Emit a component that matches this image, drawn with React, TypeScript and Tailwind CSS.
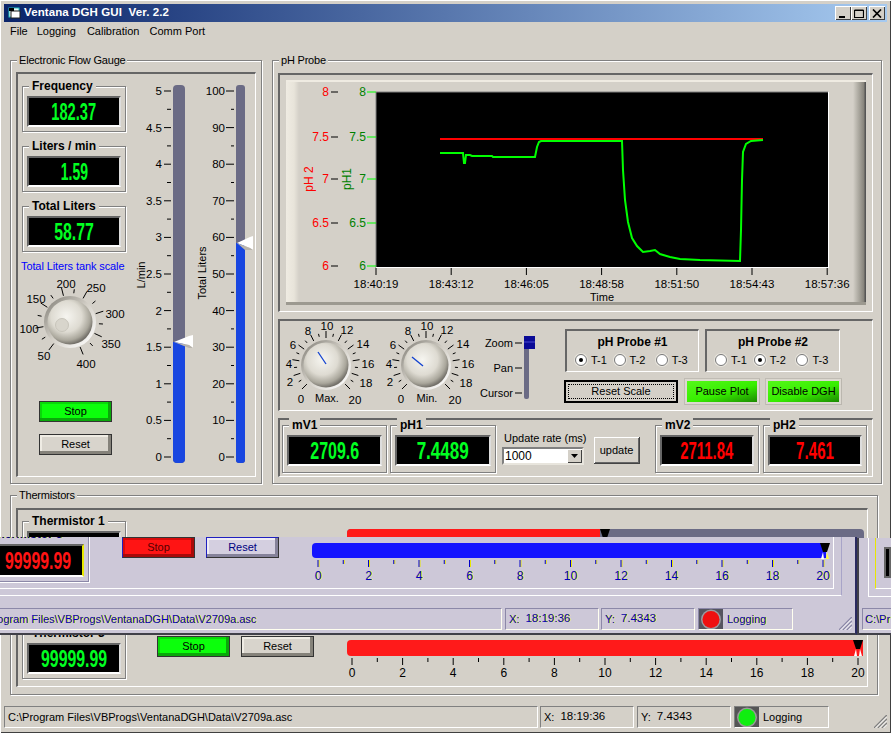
import React from "react";

const ink = "#000";

function Tx({ x, y, c = ink, a = "middle", s = 11, children }: { x: number; y: number; c?: string; a?: "start" | "middle" | "end"; s?: number; children: React.ReactNode }) {
  return (
    <text x={x} y={y + 4} fill={c} textAnchor={a} fontSize={s}>
      {children}
    </text>
  );
}

function Group({ label, className, children }: { label: string; className: string; children: React.ReactNode }) {
  return (
    <div className={"border border-[#808080] shadow-[inset_1px_1px_0_#fff,1px_1px_0_#fff] flex flex-col " + className}>
      <div className="-mt-[8px] ml-[6px] mb-[-6px] w-fit h-[14px] px-[2px] bg-[#d4d0c8] text-[11px] tracking-[-0.2px] leading-[14px] whitespace-nowrap">{label}</div>
      {children}
    </div>
  );
}

const sunken = "border-t-2 border-l-2 border-[#666666] border-r border-b border-r-white border-b-white";

function Reading({ label, value, color = "text-[#00ff21]", w = "w-[104px]", h = "h-[46px]", sx = "scale-x-[0.63]" }: { label: string; value: string; color?: string; w?: string; h?: string; sx?: string }) {
  return (
    <div className={"shrink-0 border border-[#808080] shadow-[inset_1px_1px_0_#fff,1px_1px_0_#fff] flex flex-col " + w + " " + h}>
      <div className="-mt-[8px] ml-[6px] w-fit h-[14px] px-[3px] bg-[#d4d0c8] text-[12px] font-bold leading-[14px] whitespace-nowrap">{label}</div>
      <div className="mx-[4px] mt-[3px] h-[31px] bg-black border-2 border-[#666666] border-b-white border-r-[#ddd] flex items-center justify-center overflow-hidden">
        <span className={"text-[24px] font-bold leading-none whitespace-nowrap " + sx + " " + color}>{value}</span>
      </div>
    </div>
  );
}

function Btn({ children, className }: { children: React.ReactNode; className: string }) {
  return <div className={"shrink-0 flex items-center justify-center text-[11px] " + className}>{children}</div>;
}
const stopGreen = "w-[73px] h-[21px] border border-[#333] bg-[#0cff0c] shadow-[inset_-3px_-3px_0_#0aa80a,inset_2px_2px_0_#0ad80a]";
const resetGray = "w-[73px] h-[21px] border border-[#333] bg-[#d8d4cc] shadow-[inset_-3px_-3px_0_#85827a,inset_2px_2px_0_#efece4]";

function Radio({ on }: { on?: boolean }) {
  return (
    <span className="w-[12px] h-[12px] rounded-full bg-white border border-[#777] shadow-[0_0_0_1px_#e8e5dd] flex items-center justify-center">
      {on && <span className="w-[4px] h-[4px] rounded-full bg-black" />}
    </span>
  );
}

function Probe({ title, sel, w }: { title: string; sel: number; w: string }) {
  return (
    <div className={"h-[43px] flex flex-col border-t-2 border-l-2 border-[#666] border-b border-r border-b-white border-r-white " + w}>
      <div className="text-center text-[12px] font-bold leading-[14px] mt-[4px]">{title}</div>
      <div className="flex mt-[4px] pl-[8px] text-[11px] leading-[14px]">
        {["T-1", "T-2", "T-3"].map((t, i) => (
          <div key={t} className={"flex items-center gap-[4px] " + (i === 0 ? "w-[42px]" : "w-[46px]")}>
            <Radio on={sel === i} />
            <span>{t}</span>
          </div>
        ))}
      </div>
    </div>
  );
}

function GreenBtn({ children, w }: { children: React.ReactNode; w: string }) {
  return (
    <div className={"h-[27px] p-[3px] bg-[#dcd8d0] shadow-[inset_1px_1px_0_#c0bcb4,inset_-1px_-1px_0_#bbb7af] shrink-0 " + w}>
      <div className="h-full flex items-center justify-center text-[11px] bg-[linear-gradient(165deg,#55f71a_0%,#37ee00_55%,#1c8a00_100%)]">{children}</div>
    </div>
  );
}

function Sliders() {
  const ticks = Array.from({ length: 21 }, (_, i) => i);
  return (
    <svg className="shrink-0" width={130} height={404} viewBox="126 74 130 404">
      {ticks.map((i) => {
        const y = 457 - i * 18.3;
        const major = i % 2 === 0;
        return (
          <g key={i}>
            <line x1={major ? 164 : 167} x2={171} y1={y} y2={y} stroke="#000" />
            <line x1={major ? 226 : 231} x2={234} y1={y} y2={y} stroke="#000" />
            {major && (
              <>
                <Tx x={162} y={y} a="end" s={11.5}>{String(i / 4)}</Tx>
                <Tx x={225} y={y} a="end" s={11.5}>{String(i * 5)}</Tx>
              </>
            )}
          </g>
        );
      })}
      <rect x={173} y={85} width={12} height={378} rx={4} fill="#6b6b85" />
      <path d="M173 342H185V459Q185 463 181 463H177Q173 463 173 459Z" fill="#1846e0" />
      <polygon points="174,342 189,336 193,335 193,348 189,345" fill="#fff" />
      <polygon points="174,342 189,345 193,348 189,348" fill="#b8b4ac" />
      <rect x={236} y={85} width={9} height={378} rx={3} fill="#6b6b85" />
      <path d="M236 243H245V460Q245 463 242 463H239Q236 463 236 460Z" fill="#1846e0" />
      <polygon points="237,243 250,237 253,236 253,250 250,248" fill="#fff" />
      <polygon points="237,243 250,248 253,250 245,250" fill="#b8b4ac" />
      <text transform="translate(145 275) rotate(-90)" textAnchor="middle" fontSize={11}>L/min</text>
      <text transform="translate(206 273) rotate(-90)" textAnchor="middle" fontSize={11}>Total Liters</text>
    </svg>
  );
}

function KnobDefs({ id }: { id: string }) {
  return (
    <defs>
      <radialGradient id={id} cx="0.42" cy="0.38" r="0.62">
        <stop offset="0" stopColor="#f6f5f0" />
        <stop offset="0.55" stopColor="#dedbd2" />
        <stop offset="0.85" stopColor="#aaa79c" />
        <stop offset="1" stopColor="#74716a" />
      </radialGradient>
      <linearGradient id={id + "r"} x1="0" y1="0" x2="1" y2="1">
        <stop offset="0.1" stopColor="#8f8c84" />
        <stop offset="0.5" stopColor="#d4d0c8" />
        <stop offset="0.95" stopColor="#ffffff" />
      </linearGradient>
    </defs>
  );
}

function radial(cx: number, cy: number, deg: number, r1: number, r2: number) {
  const t = (deg * Math.PI) / 180;
  return { x1: cx + Math.sin(t) * r1, y1: cy - Math.cos(t) * r1, x2: cx + Math.sin(t) * r2, y2: cy - Math.cos(t) * r2 };
}

function TankKnob() {
  const cx = 70, cy = 322;
  const labels: [string, number, number][] = [["50", 44, 356], ["100", 29, 329], ["150", 36, 299], ["200", 66, 284], ["250", 96, 288], ["300", 115, 314], ["350", 111, 344], ["400", 86, 364]];
  return (
    <svg className="shrink-0" width={110} height={96} viewBox="18 276 110 96">
      <KnobDefs id="tank" />
      {Array.from({ length: 15 }, (_, i) => (
        <line key={i} {...radial(cx, cy, -143 + i * 21.5, i % 2 === 0 ? 27 : 29, i % 2 === 0 ? 35 : 33)} stroke="#000" />
      ))}
      {labels.map(([t, x, y]) => <Tx key={t} x={x} y={y} s={11.5}>{t}</Tx>)}
      <circle cx={cx} cy={cy} r={26} fill="url(#tankr)" />
      <circle cx={cx} cy={cy} r={22.5} fill="url(#tank)" />
      <circle cx={62} cy={325} r={6.5} fill="#d8d5cc" stroke="#c8c5bb" />
    </svg>
  );
}

function Knob({ id, cx, label, p }: { id: string; cx: number; label: string; p: [number, number, number, number] }) {
  const cy = 365;
  const pos: [number, number][] = [[-25, 34], [-36, 17], [-37, -1], [-33, -20], [-18, -34], [1, -39], [21, -35], [37, -21], [42, -1], [40, 18], [29, 35]];
  return (
    <g>
      <KnobDefs id={id} />
      {Array.from({ length: 41 }, (_, i) => i)
        .filter((i) => i % 2 === 0)
        .map((i) => (
          <line key={i} {...radial(cx, cy, -135 + i * 6.75, i % 4 === 0 ? 27 : 29, i % 4 === 0 ? 34 : 32)} stroke="#000" />
        ))}
      {pos.map(([dx, dy], i) => <Tx key={i} x={cx + dx} y={cy + dy} s={11.5}>{String(i * 2)}</Tx>)}
      <circle cx={cx} cy={cy} r={25} fill={`url(#${id}r)`} />
      <circle cx={cx} cy={cy} r={22.5} fill={`url(#${id})`} />
      <line x1={p[0]} y1={p[1]} x2={p[2]} y2={p[3]} stroke="#1040d0" strokeWidth={1.3} />
      <Tx x={cx + 1} y={398} s={11}>{label}</Tx>
    </g>
  );
}

function KnobRow() {
  return (
    <svg className="shrink-0" width={280} height={90} viewBox="280 321 280 90">
      <Knob id="k1" cx={326} label="Max." p={[318, 352, 326, 364]} />
      <Knob id="k2" cx={426} label="Min." p={[412, 357, 423, 366]} />
      {[["Zoom", 343], ["Pan", 368], ["Cursor", 393]].map(([t, y]) => (
        <g key={t as string}>
          <Tx x={513} y={y as number} a="end" s={11}>{t}</Tx>
          <line x1={515} x2={522} y1={y as number} y2={y as number} stroke="#000" />
        </g>
      ))}
      <rect x={524} y={340} width={5} height={59} rx={2} fill="#6b6b85" />
      <rect x={524} y={336} width={11} height={13} fill="#0a0a96" />
      <line x1={524} x2={535} y1={342} y2={342} stroke="#4a4ad0" />
    </svg>
  );
}

function Chart() {
  const ty: [string, number][] = [["8", 92], ["7.5", 137], ["7", 179], ["6.5", 223], ["6", 266]];
  const tx = ["18:40:19", "18:43:12", "18:46:05", "18:48:58", "18:51:50", "18:54:43", "18:57:36"];
  const green = "440,153 463,153 464,163 465,163 466,155 470,155 472,156 492,156 493,157 535,157 537,147 539,142 541,141 622,141 623,170 625,200 628,222 632,238 637,246 643,252 650,251 655,250 660,254 670,257 680,259 700,260 740,261 741,230 742,180 743,152 746,144 751,141 763,140";
  return (
    <svg className="shrink-0" width={580} height={225} viewBox="286 80 580 225">
      <rect x={376} y={92} width={452} height={175} fill="#000" />
      <line x1={376} x2={376} y1={92} y2={268} stroke="#808080" />
      <line x1={376} x2={828} y1={92} y2={92} stroke="#808080" />
      <line x1={376} x2={829} y1={267.5} y2={267.5} stroke="#fff" />
      <line x1={828.5} x2={828.5} y1={92} y2={268} stroke="#fff" />
      {ty.map(([t, y]) => (
        <g key={t}>
          <Tx x={329} y={y} a="end" c="#ff0000" s={12}>{t}</Tx>
          <line x1={331} x2={338} y1={y} y2={y} stroke="#000" />
          <Tx x={366} y={y} a="end" c="#008000" s={12}>{t}</Tx>
          <line x1={367} x2={376} y1={y} y2={y} stroke="#00ff00" />
        </g>
      ))}
      <text transform="translate(313 179) rotate(-90)" textAnchor="middle" fontSize={12} fill="#ff0000">pH 2</text>
      <text transform="translate(351 179) rotate(-90)" textAnchor="middle" fontSize={12} fill="#008000">pH1</text>
      {tx.map((t, i) => {
        const x = 376 + i * 75.2;
        return (
          <g key={t}>
            <line x1={x} x2={x} y1={268} y2={275} stroke="#000" />
            <Tx x={x} y={284} s={11.5}>{t}</Tx>
          </g>
        );
      })}
      <Tx x={602} y={297} s={11}>Time</Tx>
      <polyline points="440,139 763,139" stroke="#ff0000" strokeWidth={2} fill="none" />
      <polyline points={green} stroke="#00ff00" strokeWidth={2} fill="none" />
    </svg>
  );
}

function Thumb({ x, y, ghost }: { x: number; y: number; ghost?: boolean }) {
  return (
    <g>
      <polygon points={`${x},${y} ${x + 10},${y} ${x + 7},${y + 9} ${x + 3},${y + 9}`} fill="#000" />
      <polygon points={`${x + 1},${y + 16} ${x + 3},${y + 9} ${x + 4},${y + 16}`} fill="#fff" />
      <polygon points={`${x + 6},${y + 16} ${x + 7},${y + 9} ${x + 9},${y + 16}`} fill={ghost ? "#ffff40" : "#fff"} />
    </g>
  );
}

function BottomScale() {
  return (
    <svg className="shrink-0 mt-[3px]" width={526} height={46} viewBox="340 636 526 46">
      <path d="M351 640H863V656H351Q347 656 347 652V644Q347 640 351 640Z" fill="#ff1a1a" />
      <Thumb x={853} y={640} />
      {Array.from({ length: 21 }, (_, i) => {
        const x = 352 + i * 25.3;
        return (
          <g key={i}>
            <line x1={x} x2={x} y1={658} y2={i % 2 === 0 ? 665 : 662} stroke="#000" />
            {i % 2 === 0 && <Tx x={x} y={673} s={12}>{String(i)}</Tx>}
          </g>
        );
      })}
    </svg>
  );
}

function TopBar() {
  return (
    <svg className="shrink-0" width={526} height={20} viewBox="340 521 526 20">
      <rect x={347} y={529} width={517} height={20} rx={4} fill="#6b6b85" />
      <path d="M351 529H600V549H347V533Q347 529 351 529Z" fill="#ff1a1a" />
      <Thumb x={600} y={529} />
    </svg>
  );
}

function GhostScale() {
  const blue = "#0000c8", y2 = "#e8e800";
  return (
    <svg className="shrink-0" width={533} height={51} viewBox="300 537 533 51">
      <path d="M316 543H826V558H316Q312 558 312 554V547Q312 543 316 543Z" fill="#1414ff" />
      <Thumb x={820} y={543} ghost />
      {Array.from({ length: 21 }, (_, i) => {
        const x = 318 + i * 25.25;
        return (
          <g key={i}>
            <line x1={x + 1} x2={x + 1} y1={560} y2={i % 2 === 0 ? 567 : 564} stroke={y2} />
            <line x1={x} x2={x} y1={560} y2={i % 2 === 0 ? 567 : 564} stroke={blue} />
            {i % 2 === 0 && (
              <>
                <Tx x={x + 1} y={576} s={12} c={y2}>{String(i)}</Tx>
                <Tx x={x} y={576} s={12} c={blue}>{String(i)}</Tx>
              </>
            )}
          </g>
        );
      })}
    </svg>
  );
}

function Grip({ a, b }: { a: string; b: string }) {
  return (
    <svg className="shrink-0 self-end ml-auto" width={13} height={13} viewBox="0 0 13 13">
      {[0, 4, 8].map((o) => (
        <g key={o}>
          <line x1={o} y1={13} x2={13} y2={o} stroke={a} strokeWidth={1.5} />
          <line x1={o + 1.5} y1={13} x2={13} y2={o + 1.5} stroke={b} />
        </g>
      ))}
    </svg>
  );
}

function Led({ color, rim, ring }: { color: string; rim: string; ring: string }) {
  return (
    <svg className="shrink-0" width={24} height={21} viewBox="0 0 24 21">
      <rect width={24} height={21} fill={rim} />
      <circle cx={12} cy={10.5} r={10} fill={ring} />
      <circle cx={12} cy={10.5} r={8.5} fill={color} />
    </svg>
  );
}

const cell = "h-[22px] border border-[#808080] border-r-white border-b-white flex items-center whitespace-nowrap text-[11px] shrink-0 overflow-hidden";
const gcell = "h-[22px] border border-[#8c88a8] border-r-[#fffff0] border-b-[#fffff0] flex items-center whitespace-nowrap text-[11px] shrink-0 overflow-hidden text-[#0000c0] [text-shadow:1px_0_0_#e8e800]";
const file = "C:\\Program Files\\VBProgs\\VentanaDGH\\Data\\V2709a.asc";

function Ghost() {
  return (
    <>
      <div className="absolute left-0 top-[537px] w-[857px] h-[98px] overflow-hidden bg-[#cdc8d8] border-b-2 border-r-2 border-b-[#404048] border-r-[#2a2a60]">
        <div className="w-[842px] h-[59px] border-b border-r border-b-white border-r-[#a8a4c8] flex flex-col">
          <div className="w-[834px] h-[52px] flex items-start border-b border-r border-b-white border-r-white">
            <div className="shrink-0 -ml-[20px] -mt-[3px] w-[109px] h-[48px] border border-[#8c88a8] shadow-[inset_1px_1px_0_#fff,1px_1px_0_#fff] flex flex-col">
              <div className="-mt-[8px] ml-[6px] w-fit h-[14px] px-[3px] text-[12px] font-bold leading-[14px] whitespace-nowrap text-[#000080] [text-shadow:1px_0_0_#e8e800]">Thermistor 3</div>
              <div className="mx-[4px] mt-[3px] h-[33px] bg-black border-2 border-[#666] border-r-[#e8e800] border-b-white flex items-center justify-start pl-[18px]">
                <span className="text-[24px] font-bold leading-none scale-x-[0.66] origin-left whitespace-nowrap text-[#ff1414]">99999.99</span>
              </div>
            </div>
            <Btn className="ml-[33px] w-[73px] h-[21px] border border-[#333] border-l-[#2020c0] bg-[#ff1414] shadow-[inset_-3px_-3px_0_#a80a0a,inset_2px_2px_0_#d80a0a] text-[#500]">Stop</Btn>
            <Btn className="ml-[11px] w-[73px] h-[21px] border border-[#333] border-l-[#2020c0] border-t-[#2020c0] bg-[#d4cfe0] shadow-[inset_-3px_-3px_0_#85829a,inset_2px_2px_0_#efecf4] text-[#000080]">Reset</Btn>
            <div className="ml-[21px]"><GhostScale /></div>
          </div>
        </div>
        <div className="flex h-[22px] mt-[12px] gap-[3px] pr-[3px]">
          <div className={gcell + " -ml-[33px] w-[535px] pl-[4px]"}>{file}</div>
          <div className={gcell + " w-[94px] pl-[3px] gap-[6px]"}><span>X:</span><span className="text-[11.5px]">18:19:36</span></div>
          <div className={gcell + " w-[94px] ml-[-1px] pl-[3px] gap-[6px]"}><span>Y:</span><span className="text-[11.5px]">7.4343</span></div>
          <div className={gcell + " w-[95px] gap-[4px]"}>
            <Led color="#ee1010" rim="#55555f" ring="#9a9aa0" />
            <span>Logging</span>
          </div>
          <Grip a="#8c88a8" b="#ffffff" />
        </div>
      </div>
      <div className="absolute left-[857px] top-[538px] w-[34px] h-[97px] overflow-hidden bg-[#cdc8d8] border-l-2 border-b-2 border-l-[#404048] border-b-[#404048]">
        <div className="ml-[9px] h-[59px] border-l border-b border-white flex flex-col">
          <div className="ml-[6px] h-[51px] border-l border-b border-l-[#e8e800] border-b-white pl-[8px] pt-[9px]">
            <div className="h-[31px] bg-black border-2 border-[#666]" />
          </div>
        </div>
        <div className={gcell + " ml-[3px] mt-[11px] w-[40px] pl-[2px]"}>C:\Pr</div>
      </div>
    </>
  );
}

export default function App() {
  return (
    <div className="relative w-[891px] h-[733px] overflow-hidden bg-[#d4d0c8] p-[4px] flex flex-col text-black font-['Liberation_Sans',Arial,sans-serif] shadow-[inset_1px_1px_0_#fff,inset_-1px_-1px_0_#404040]">
      <div className="h-[18px] shrink-0 flex items-center bg-[linear-gradient(90deg,#0a246a,#a6caf0)] pl-[4px] pr-[2px]">
        <svg width={13} height={12} viewBox="0 0 13 12" className="shrink-0">
          <rect x={1} y={1} width={10} height={9} fill="#e8f4f4" stroke="#20c0c0" />
          <rect x={3} y={4} width={9} height={7} fill="#fff" stroke="#202020" />
          <rect x={1} y={1} width={5} height={3} fill="#000" />
        </svg>
        <span className="ml-[3px] text-white font-bold text-[11.5px] tracking-[0.1px] whitespace-pre">Ventana DGH GUI  Ver. 2.2</span>
        <div className="ml-auto flex">
          {[0, 1, 2].map((i) => (
            <div key={i} className={"w-[16px] h-[14px] bg-[#d4d0c8] shadow-[inset_1px_1px_0_#fff,inset_-1px_-1px_0_#404040] flex items-center justify-center " + (i === 2 ? "ml-[2px]" : "")}>
              <svg width={10} height={9} viewBox="0 0 10 9">
                {i === 0 && <rect x={1} y={7} width={6} height={2} fill="#000" />}
                {i === 1 && <path d="M0.5 1.5H9.5V8.5H0.5ZM0.5 1H9.5" fill="none" stroke="#000" strokeWidth={1.2} />}
                {i === 2 && <path d="M1 0.5L9 8.5M9 0.5L1 8.5" stroke="#000" strokeWidth={1.7} />}
              </svg>
            </div>
          ))}
        </div>
      </div>

      <div className="h-[19px] shrink-0 flex items-center text-[11px] pl-[6px]">
        <span>File</span>
        <span className="ml-[9px]">Logging</span>
        <span className="ml-[11px]">Calibration</span>
        <span className="ml-[10px]">Comm Port</span>
      </div>

      <div className="mt-[19px] ml-[6px] flex shrink-0 gap-[10px] items-start">
        <Group label="Electronic Flow Gauge" className="w-[252px] h-[424px]">
          <div className={"ml-[5px] mt-[11px] w-[240px] h-[405px] flex " + sunken}>
            <div className="w-[108px] shrink-0 pl-[4px] pt-[12px] flex flex-col">
              <Reading label="Frequency" value="182.37" sx="scale-x-[0.61]" />
              <div className="mt-[14px]"><Reading label="Liters / min" value="1.59" sx="scale-x-[0.58]" /></div>
              <div className="mt-[14px]"><Reading label="Total Liters" value="58.77" sx="scale-x-[0.66]" /></div>
              <div className="mt-[7px] -ml-[1px] text-[11px] tracking-[-0.1px] leading-[14px] text-[#0000ff] whitespace-nowrap">Total Liters tank scale</div>
              <div className="-ml-[4px] mt-[3px]"><TankKnob /></div>
              <Btn className={"ml-[17px] mt-[29px] " + stopGreen}>Stop</Btn>
              <Btn className={"ml-[17px] mt-[12px] " + resetGray}>Reset</Btn>
            </div>
            <div><Sliders /></div>
          </div>
        </Group>

        <Group label="pH Probe" className="w-[610px] h-[424px]">
          <div className="ml-[5px] mt-[12px] w-[595px] flex flex-col gap-[7px]">
            <div className={"h-[239px] pl-[6px] pt-[5px] " + sunken}>
              <div className="w-[580px] h-[225px] bg-[linear-gradient(90deg,#efebe2_0,#e8e4da_8px,#d4d0c8_13px,#d4d0c8_calc(100%-13px),#b0ada4_calc(100%-8px),#85827a_calc(100%-2px),#555_calc(100%-1px))] shadow-[inset_0_2px_0_#efebe2,inset_0_-3px_0_#9c9990]">
                <Chart />
              </div>
            </div>
            <div className={"h-[92px] flex " + sunken}>
              <KnobRow />
              <div className="ml-[4px] flex flex-col">
                <div className="flex gap-[6px] mt-[8px] ml-[1px]">
                  <Probe title="pH Probe #1" sel={0} w="w-[134px]" />
                  <Probe title="pH Probe #2" sel={1} w="w-[135px]" />
                </div>
                <div className="flex items-center mt-[6px]">
                  <div className="w-[114px] h-[23px] border-2 border-black bg-[#d4d0c8] p-[2px] shrink-0">
                    <div className="h-full border border-dotted border-black flex items-center justify-center text-[11px]">Reset Scale</div>
                  </div>
                  <div className="ml-[6px]"><GreenBtn w="w-[76px]">Pause Plot</GreenBtn></div>
                  <div className="ml-[5px]"><GreenBtn w="w-[77px]">Disable DGH</GreenBtn></div>
                </div>
              </div>
            </div>
            <div className={"h-[59px] flex items-start pl-[2px] pt-[5px] " + sunken}>
              <Reading label="mV1" value="2709.6" w="w-[105px]" h="h-[48px]" sx="scale-x-[0.667]" />
              <div className="ml-[3px]"><Reading label="pH1" value="7.4489" w="w-[106px]" h="h-[48px]" sx="scale-x-[0.71]" /></div>
              <div className="ml-[6px] w-[82px] shrink-0 flex flex-col">
                <div className="text-[11px] leading-[14px] mt-[6px] ml-[2px] whitespace-nowrap">Update rate (ms)</div>
                <div className="mt-[2px] h-[18px] bg-white border-2 border-[#808080] border-b-[#e8e5dd] border-r-[#e8e5dd] flex items-center text-[12px] pl-[1px]">
                  <span>1000</span>
                  <div className="ml-auto w-[15px] h-full bg-[#d4d0c8] shadow-[inset_1px_1px_0_#fff,inset_-1px_-1px_0_#404040] flex items-center justify-center">
                    <svg width={7} height={4} viewBox="0 0 7 4"><polygon points="0,0 7,0 3.5,4" fill="#000" /></svg>
                  </div>
                </div>
              </div>
              <Btn className="ml-[10px] mt-[12px] w-[46px] h-[27px] bg-[#d4d0c8] shadow-[inset_1px_1px_0_#fff,inset_-1px_-1px_0_#666] border-r border-b border-[#444]">update</Btn>
              <div className="ml-[15px]"><Reading label="mV2" value="2711.84" color="text-[#ff0000]" h="h-[48px]" sx="scale-x-[0.62]" /></div>
              <div className="ml-[4px]"><Reading label="pH2" value="7.461" color="text-[#ff0000]" h="h-[48px]" sx="scale-x-[0.63]" /></div>
            </div>
          </div>
        </Group>
      </div>

      <div className="mt-[11px] ml-[6px] shrink-0">
        <Group label="Thermistors" className="w-[868px] h-[200px]">
          <div className={"ml-[5px] mt-[12px] w-[852px] h-[179px] pl-[4px] pt-[11px] flex flex-col " + sunken}>
            <div className="flex items-start">
              <Reading label="Thermistor 1" value="99999.99" sx="scale-x-[0.66]" />
              <div className="ml-[214px]"><TopBar /></div>
            </div>
            <div className="flex items-start mt-[66px]">
              <Reading label="Thermistor 3" value="99999.99" sx="scale-x-[0.66]" />
              <Btn className={"ml-[31px] mt-[3px] " + stopGreen}>Stop</Btn>
              <Btn className={"ml-[11px] mt-[3px] " + resetGray}>Reset</Btn>
              <div className="ml-[26px]"><BottomScale /></div>
            </div>
          </div>
        </Group>
      </div>

      <div className="mt-[11px] flex shrink-0 h-[22px] gap-[3px]">
        <div className={cell + " w-[534px] pl-[3px]"}>{file}</div>
        <div className={cell + " w-[94px] pl-[3px] gap-[6px] -ml-[1px]"}><span>X:</span><span className="text-[11.5px]">18:19:36</span></div>
        <div className={cell + " w-[94px] pl-[3px] gap-[6px]"}><span>Y:</span><span className="text-[11.5px]">7.4343</span></div>
        <div className={cell + " w-[95px] gap-[4px]"}>
          <Led color="#10ee10" rim="#555" ring="#999" />
          <span>Logging</span>
        </div>
        <Grip a="#808080" b="#ffffff" />
      </div>

      <Ghost />
    </div>
  );
}
